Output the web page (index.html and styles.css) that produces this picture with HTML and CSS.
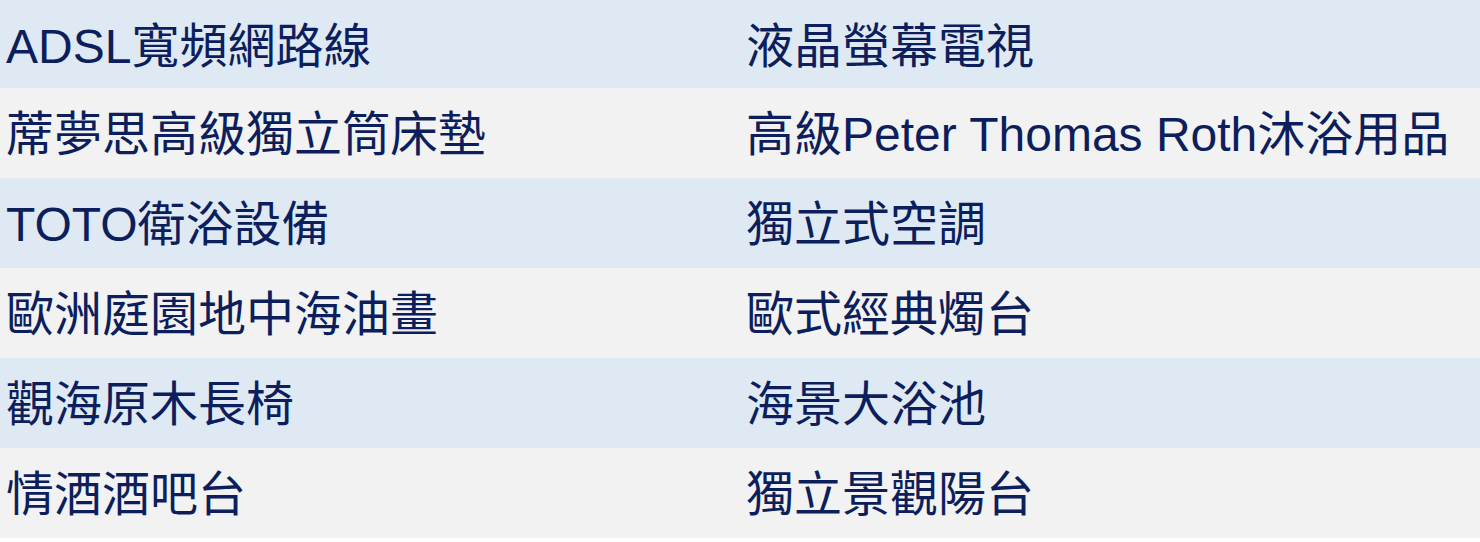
FILE: index.html
```html
<!DOCTYPE html>
<html lang="zh-Hant">
<head>
<meta charset="utf-8">
<link rel="stylesheet" href="styles.css">
</head>
<body>
<div class="table">
  <div class="row blue first"><div class="cell">ADSL寬頻網路線</div><div class="cell">液晶螢幕電視</div></div>
  <div class="row gray"><div class="cell">蓆夢思高級獨立筒床墊</div><div class="cell">高級Peter Thomas Roth沐浴用品</div></div>
  <div class="row blue"><div class="cell">TOTO衛浴設備</div><div class="cell">獨立式空調</div></div>
  <div class="row gray"><div class="cell">歐洲庭園地中海油畫</div><div class="cell">歐式經典燭台</div></div>
  <div class="row blue"><div class="cell">觀海原木長椅</div><div class="cell">海景大浴池</div></div>
  <div class="row gray"><div class="cell">情酒酒吧台</div><div class="cell">獨立景觀陽台</div></div>
</div>
</body>
</html>
```
FILE: styles.css
```css
html, body {
  margin: 0;
  padding: 0;
  background: #ffffff;
}
.table {
  display: flex;
  flex-direction: column;
  width: 1480px;
}
.row {
  display: grid;
  grid-template-columns: 740px 740px;
  height: 90px;
}
.row.first {
  height: 88px;
}
.blue { background: #dfe9f4; }
.gray { background: #f2f2f2; }
.cell {
  display: flex;
  align-items: center;
  padding-left: 6px;
  padding-bottom: 6px;
  box-sizing: border-box;
  font-family: "Liberation Sans", "Noto Sans CJK TC", sans-serif;
  font-size: 48px;
  color: #0c1f5c;
  white-space: nowrap;
}
.row.first .cell {
  padding-bottom: 4px;
}
```
